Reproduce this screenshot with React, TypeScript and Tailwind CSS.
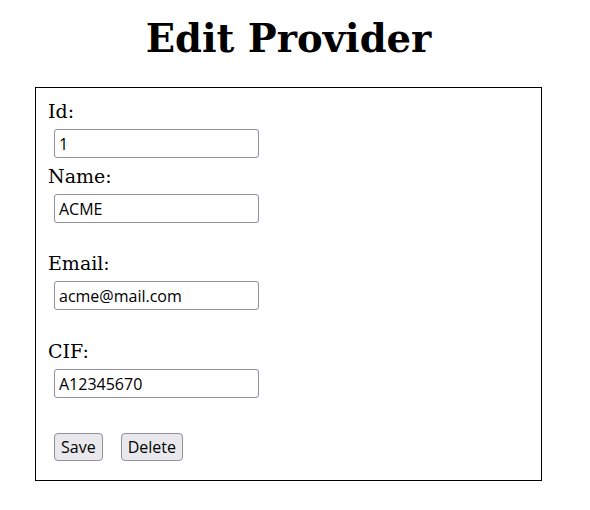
export default function App() {
  const fields = [
    { label: "Id:", value: "1", gap: "mt-[12px]" },
    { label: "Name:", value: "ACME", gap: "mt-[7px]" },
    { label: "Email:", value: "acme@mail.com", gap: "mt-[29px]" },
    { label: "CIF:", value: "A12345670", gap: "mt-[30px]" },
  ];

  return (
    <div className="w-[577px] bg-white text-black font-['DejaVu_Serif',serif]">
      <h1 className="mt-4 text-center text-[38.5px] leading-[45px] font-bold">Edit Provider</h1>

      <form className="mt-[26px] ml-[35px] w-[507px] border border-black px-3 pb-[19px]">
        {fields.map((f) => (
          <div key={f.label} className={f.gap}>
            <label className="block text-[19px] leading-[22px] font-['DejaVu_Serif',serif]">{f.label}</label>
            <input
              defaultValue={f.value}
              className="mt-[7px] ml-[6px] block h-[29px] w-[205px] rounded-[3px] border border-[#8f8f9d] px-1 text-base text-black font-['Open_Sans',sans-serif]"
            />
          </div>
        ))}

        <div className="mt-[35px] ml-[6px] flex gap-[18px]">
          <button
            type="button"
            className="h-[28px] rounded-[4px] border border-[#8f8f9d] bg-[#e9e9ed] px-[6px] text-base font-['Open_Sans',sans-serif]"
          >
            Save
          </button>
          <button
            type="button"
            className="h-[28px] rounded-[4px] border border-[#8f8f9d] bg-[#e9e9ed] px-[6px] text-base font-['Open_Sans',sans-serif]"
          >
            Delete
          </button>
        </div>
      </form>
    </div>
  );
}
